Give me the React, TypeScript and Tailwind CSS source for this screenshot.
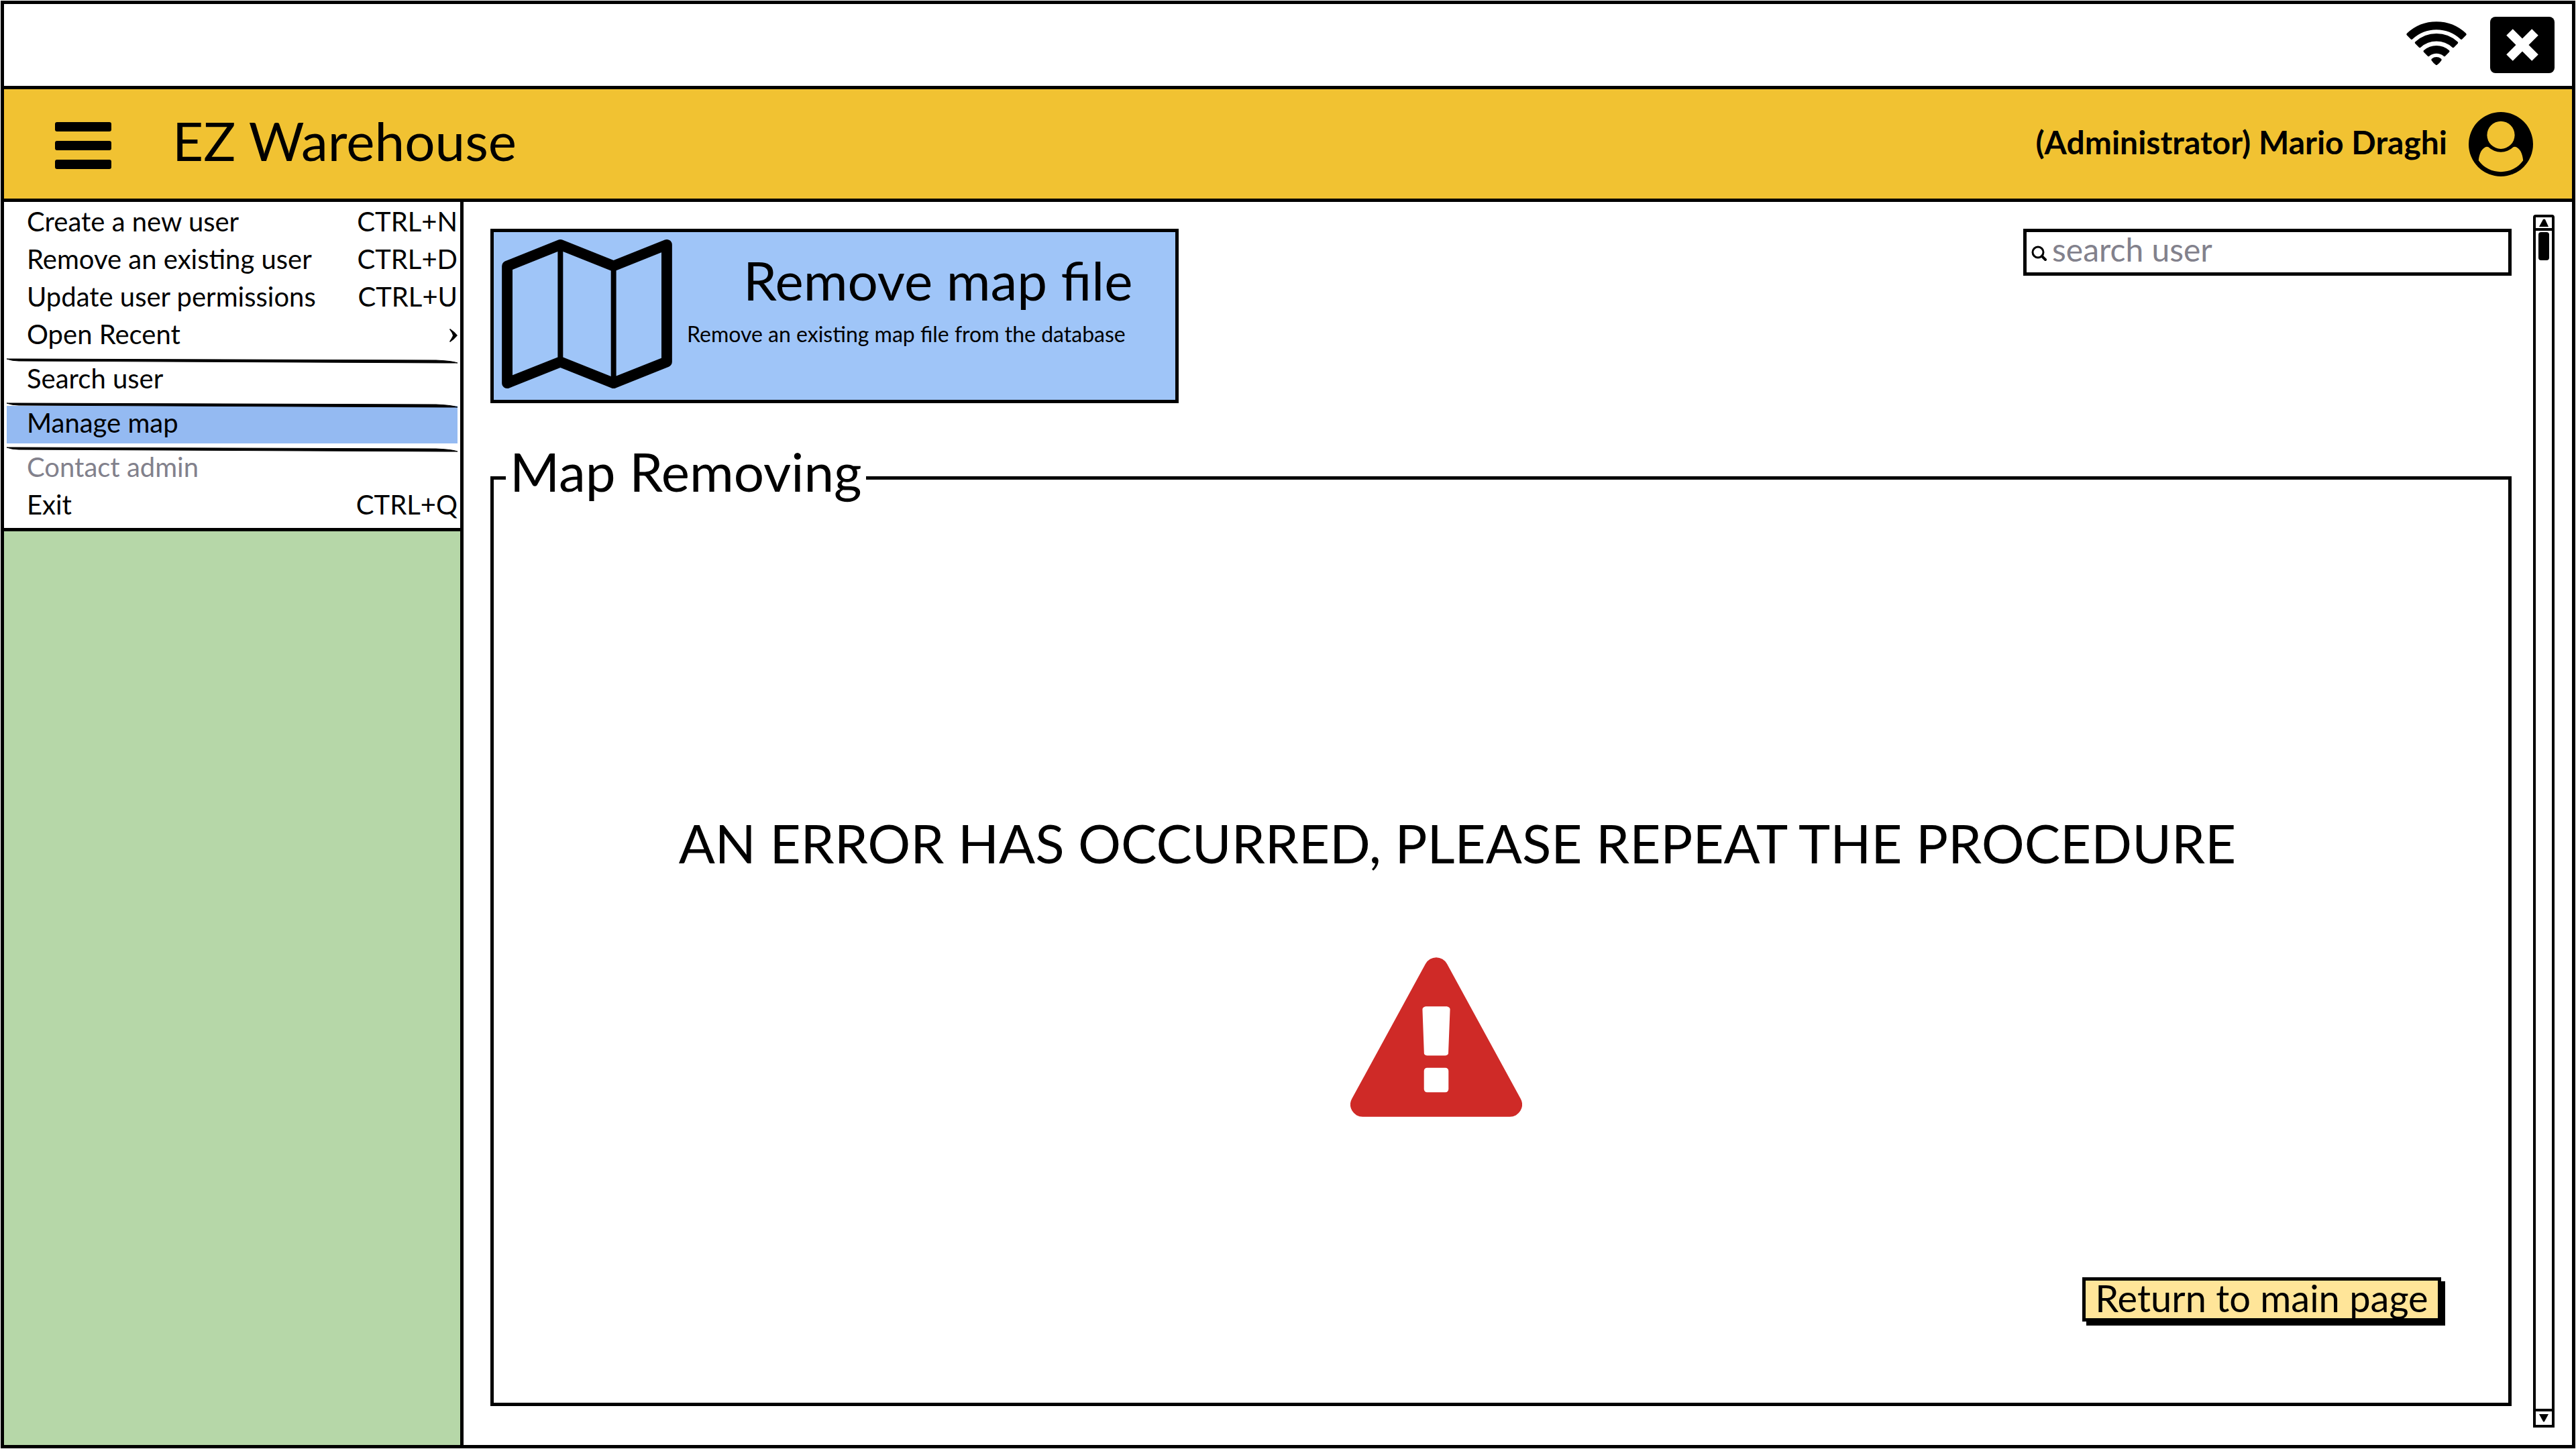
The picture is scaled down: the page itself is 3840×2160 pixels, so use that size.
import React from "react";

const FONT = "font-['Lato',sans-serif]";

function MapIcon({ className }: { className?: string }) {
  return (
    <svg className={className} viewBox="0 0 2048 1792" fill="currentColor" aria-hidden="true">
      <path d="M2020 11q28 20 28 53v1408q0 20-11 36t-29 23l-640 256q-24 11-48 0l-616-246-616 246q-10 5-24 5-19 0-36-11-28-20-28-53v-1408q0-20 11-36t29-23l640-256q24-11 48 0l616 246 616-246q32-13 60 6zm-1284 135v1270l576 230v-1270zm-608 217v1270l544-217v-1270zm1792 1063v-1270l-544 217v1270z" />
    </svg>
  );
}

function WarningIcon({ className }: { className?: string }) {
  return (
    <svg className={className} viewBox="0 0 1792 1664" fill="currentColor" aria-hidden="true">
      <path d="M1024 1375v-190q0-14-9.5-23.5t-22.5-9.5h-192q-13 0-22.5 9.5t-9.5 23.5v190q0 14 9.5 23.5t22.5 9.5h192q13 0 22.5-9.5t9.5-23.5zm-2-374l18-459q0-12-10-19-13-11-24-11h-220q-11 0-24 11-10 7-10 21l17 457q0 10 10 16.5t24 6.5h185q14 0 23.5-6.5t10.5-16.5zm-14-934l768 1408q35 63-2 126-17 29-46.5 46t-63.5 17h-1536q-34 0-63.5-17t-46.5-46q-37-63-2-126l768-1408q17-31 47-49t65-18 65 18 47 49z" />
    </svg>
  );
}

function WifiIcon({ className }: { className?: string }) {
  return (
    <svg className={className} viewBox="-138 -193 276 196" fill="#000" stroke="#000" strokeWidth="12" strokeLinejoin="round" aria-hidden="true">
      <path d="M-128 -136.4A187 187 0 0 1 128 -136.4L111 -119.5A163 163 0 0 0 -111 -119.5Z" />
      <path d="M-90.6 -99A134 134 0 0 1 90.6 -99L74.3 -82.7A111 111 0 0 0 -74.3 -82.7Z" />
      <path d="M-52.4 -60.8A80 80 0 0 1 52.4 -60.8L35.4 -43.8A56 56 0 0 0 -35.4 -43.8Z" />
      <path d="M-17 -23A28 28 0 0 1 17 -23Q10 -13 0 -5Q-10 -13 -17 -23Z" />
    </svg>
  );
}

function CloseIcon({ className }: { className?: string }) {
  return (
    <svg className={className} viewBox="0 0 96 84" aria-hidden="true">
      <rect width="96" height="84" rx="8" fill="#000" />
      <path d="M29 23L67 61M67 23L29 61" stroke="#fff" strokeWidth="13.5" />
    </svg>
  );
}

function UserIcon({ className }: { className?: string }) {
  return (
    <svg className={className} viewBox="0 0 96 96" aria-hidden="true">
      <circle cx="48" cy="48" r="48" fill="#000" />
      <circle cx="48" cy="34.3" r="20.6" fill="#f1c232" />
      <path d="M29.5 52.2A26.5 26.5 0 0 0 66.5 52.2Q69 51 71.5 52.5C78.5 56.5 80.5 65 81.2 72.3A41 41 0 0 1 14.8 72.3C15.5 65 17.5 56.5 24.5 52.5Q27 51 29.5 52.2Z" fill="#f1c232" />
    </svg>
  );
}

function BarsIcon({ className }: { className?: string }) {
  return (
    <svg className={className} viewBox="0 0 84 70" fill="currentColor" aria-hidden="true">
      <rect width="84" height="14" rx="3" />
      <rect y="28" width="84" height="14" rx="3" />
      <rect y="56" width="84" height="14" rx="3" />
    </svg>
  );
}

function Separator() {
  return (
    <li role="separator" className="flex h-[10px] items-end">
      <svg className="h-1 w-full overflow-visible" viewBox="0 0 672 4" preserveAspectRatio="none" aria-hidden="true">
        <path d="M0 0Q8 3 18 3L660 6L672 6Q664 3 640 2L10 0Z" fill="#000" stroke="#000" strokeWidth="1" />
      </svg>
    </li>
  );
}

type ItemProps = { label: string; shortcut?: string; submenu?: boolean; active?: boolean; disabled?: boolean };

function MenuItem({ label, shortcut, submenu, active, disabled }: ItemProps) {
  return (
    <li>
      <button
        type="button"
        disabled={disabled}
        className={`flex w-full items-center justify-between pb-[7px] pl-[30px] pt-px text-[40px] leading-[48px] ${
          active ? "bg-[#94baf2]" : ""
        } ${disabled ? "text-[#82818c]" : "text-black"}`}
      >
        <span>{label}</span>
        {shortcut && <span>{shortcut}</span>}
        {submenu && (
          <svg className="mt-1 h-5 w-3" viewBox="0 0 12 20" aria-hidden="true">
            <path d="M1 0Q7 4 12 10Q7 16 1 20L0 19Q4 13 5 10Q4 6 0 1Z" />
          </svg>
        )}
      </button>
    </li>
  );
}

export default function App() {
  return (
    <div className={`flex min-h-screen flex-col bg-white p-px text-black ${FONT}`}>
      <div className="flex grow flex-col border-[5px] border-black">
        <div className="flex h-[122px] items-center justify-end gap-[34px] pr-[26px]">
          <WifiIcon className="mb-1 h-[66px] w-[92px]" />
          <button type="button" aria-label="Close">
            <CloseIcon className="h-[84px] w-24" />
          </button>
        </div>

        <header className="flex h-[173px] items-center border-y-[5px] border-black bg-[#f1c232] pl-[76px] pr-[58px]">
          <button type="button" aria-label="Menu" className="pt-1">
            <BarsIcon className="h-[70px] w-[84px]" />
          </button>
          <h1 className="ml-[91px] pb-3 text-[80px] leading-[96px]">EZ Warehouse</h1>
          <span className="ml-auto mr-8 pb-[6px] text-[48px] font-bold leading-[58px]">(Administrator) Mario Draghi</span>
          <UserIcon className="h-24 w-24" />
        </header>

        <div className="flex grow">
          <aside className="flex w-[685px] shrink-0 flex-col border-r-[5px] border-black bg-[#b6d7a8]">
            <nav className="border-b-[5px] border-black bg-white p-1">
              <ul>
                <MenuItem label="Create a new user" shortcut="CTRL+N" />
                <MenuItem label="Remove an existing user" shortcut="CTRL+D" />
                <MenuItem label="Update user permissions" shortcut="CTRL+U" />
                <MenuItem label="Open Recent" submenu />
                <Separator />
                <MenuItem label="Search user" />
                <Separator />
                <MenuItem label="Manage map" active />
                <Separator />
                <MenuItem label="Contact admin" disabled />
                <MenuItem label="Exit" shortcut="CTRL+Q" />
              </ul>
            </nav>
          </aside>

          <main className="flex grow flex-col pb-[58px] pl-10 pr-8 pt-10">
            <div className="flex items-start justify-between">
              <section className="flex h-[260px] w-[1026px] border-[5px] border-black bg-[#9fc5f8] pl-3 pt-[11px]">
                <MapIcon className="h-[222px] w-[254px]" />
                <div className="ml-[22px] pt-3">
                  <h2 className="pl-[84px] text-[80px] leading-[96px]">Remove map file</h2>
                  <p className="mt-[14px] text-[32px] leading-[38px]">Remove an existing map file from the database</p>
                </div>
              </section>
              <label className="flex h-[70px] w-[728px] items-center border-[5px] border-black pl-[7px]">
                <svg className="mt-1 h-6 w-6" viewBox="0 0 24 24" fill="none" stroke="#000" strokeWidth="3" aria-hidden="true">
                  <circle cx="10" cy="10" r="8" />
                  <path d="M16 16L21 21" strokeWidth="4" strokeLinecap="round" />
                </svg>
                <input
                  type="text"
                  aria-label="search user"
                  placeholder="search user"
                  className="mb-2 ml-[7px] min-w-0 grow text-[48px] leading-[58px] outline-none placeholder:text-[#82818c] placeholder:opacity-100"
                />
              </label>
            </div>

            <fieldset className="mt-[53px] flex grow flex-col border-[5px] border-black px-[18px]">
              <legend className="px-[6px] pb-5 text-[80px] leading-[96px]">Map Removing</legend>
              <div className="flex grow flex-col">
                <div className="flex flex-col items-center pr-[130px] pt-[438px]">
                  <p className="text-[80px] leading-[96px]">AN ERROR HAS OCCURRED, PLEASE REPEAT THE PROCEDURE</p>
                  <WarningIcon className="mr-16 mt-[122px] h-60 w-64 text-[#cf2a27]" />
                </div>
                <div className="mb-[121px] mr-[82px] mt-auto flex justify-end">
                  <button
                    type="button"
                    className="h-[66px] w-[535px] border-[5px] border-black bg-[#ffe599] pb-1 text-[56px] leading-[52px] shadow-[6px_6px_0_0_#000]"
                  >
                    Return to main page
                  </button>
                </div>
              </div>
            </fieldset>
          </main>

          <div className="mb-[26px] mr-[26px] mt-[19px] flex w-8 shrink-0 flex-col rounded-t-[4px] border-4 border-black">
            <button type="button" aria-label="Scroll up" className="flex h-5 items-center justify-center border-b-4 border-black">
              <svg className="h-3 w-4" viewBox="0 0 16 12" aria-hidden="true">
                <path d="M1 12L7 1Q8 0 10 1L15 12Z" />
              </svg>
            </button>
            <div className="flex grow justify-center pt-[2px]">
              <div className="h-[42px] w-4 rounded-[4px] bg-black" />
            </div>
            <button type="button" aria-label="Scroll down" className="flex h-6 items-center justify-center border-t-4 border-black">
              <svg className="h-3 w-4" viewBox="0 0 16 12" aria-hidden="true">
                <path d="M1 0H15L9 11Q8 12 7 11Z" />
              </svg>
            </button>
          </div>
        </div>
      </div>
    </div>
  );
}
